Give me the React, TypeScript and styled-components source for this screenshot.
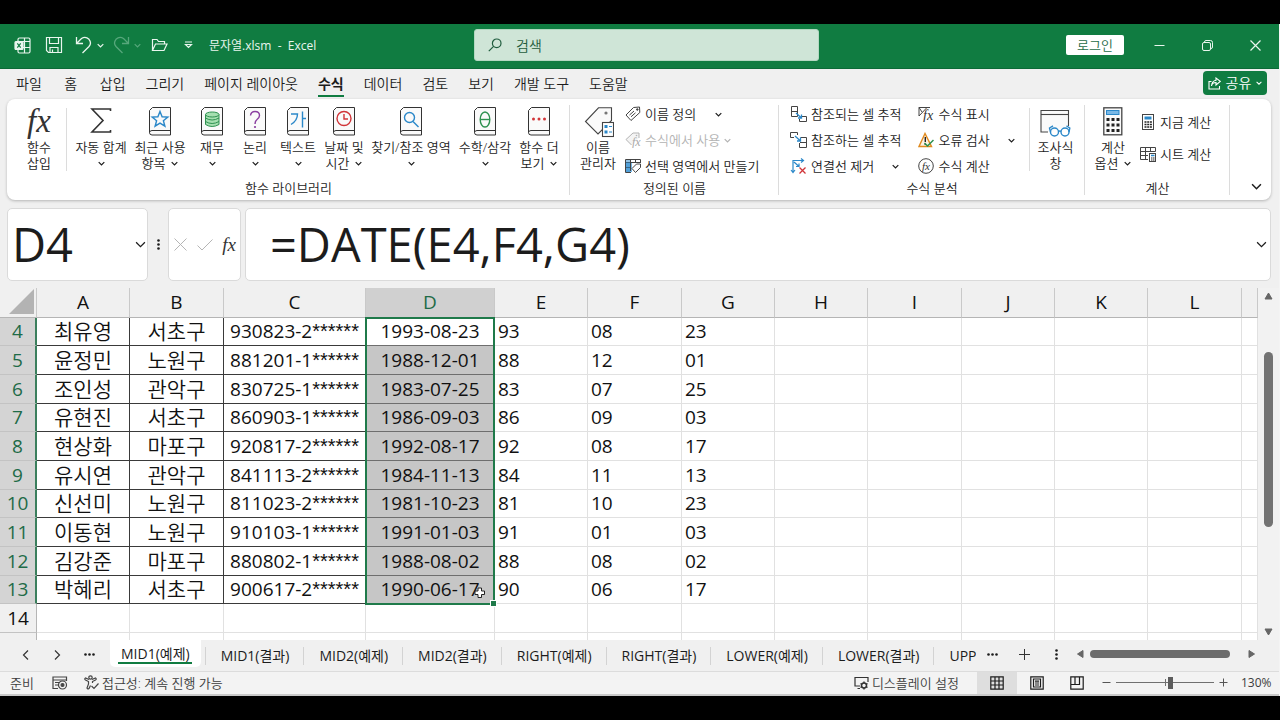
import React from "react";
import styled, { createGlobalStyle, css } from "styled-components";

const GREEN = "#107c41";
const DARK_GREEN = "#1e6b47";
const BLUE = "#2b88c9";
const INK = "#1c1c1c";
const CHROME = "#f0f0f0";

const GlobalStyle = createGlobalStyle`
  * { box-sizing: border-box; }
  body {
    margin: 0;
    background: #000;
    color: ${INK};
    font-family: "Open Sans", "Noto Sans CJK KR", sans-serif;
    font-size: 13px;
    font-weight: 350;
  }
  button, input { font: inherit; color: inherit; }
  button { border: 0; padding: 0; background: none; }
  svg { display: block; flex: none; }
`;

const Screen = styled.div`
  display: flex;
  flex-direction: column;
  height: 100vh;
  padding: 24px 0;
  overflow: hidden;
`;

const Window = styled.div`
  flex: 1;
  min-height: 0;
  display: flex;
  flex-direction: column;
  background: ${CHROME};
  border-right: 1px solid #f4f4f4;
`;

/* Title bar */

const TitleBar = styled.header`
  display: flex;
  align-items: center;
  height: 45px;
  flex: none;
  padding-bottom: 2px;
  background: ${GREEN};
  color: #e9f6ee;
  border-bottom: 1px solid #0c6a37;
`;

const QuickAccess = styled.div`
  flex: 0 0 474px;
  display: flex;
  align-items: center;
  padding-left: 14px;
`;

const QuickButton = styled.button<{ $w: number; $dim?: boolean }>`
  width: ${(p) => p.$w}px;
  height: 24px;
  display: flex;
  align-items: center;
  justify-content: center;
  color: ${(p) => (p.$dim ? "#56a77b" : "#e9f6ee")};
`;

const FileName = styled.span`
  margin-left: 8px;
  font-size: 12px;
  font-weight: 400;
  white-space: pre;
`;

const SearchBox = styled.label`
  flex: 0 1 345px;
  height: 32px;
  display: flex;
  align-items: center;
  gap: 14px;
  padding-left: 13px;
  background: #cfe5d7;
  border: 1px solid #b4d8c2;
  border-radius: 3px;
  color: #1f5c3d;
`;

const SearchInput = styled.input`
  flex: 1;
  min-width: 0;
  border: 0;
  outline: 0;
  padding: 0;
  background: transparent;
  font-size: 14px;
  &::placeholder { color: #1f5c3d; opacity: 1; }
`;

const WindowControls = styled.div`
  flex: 1;
  display: flex;
  align-items: center;
  justify-content: flex-end;
`;

const LoginButton = styled.button`
  width: 58px;
  height: 20px;
  margin-right: 11px;
  border-radius: 2px;
  background: #fff;
  color: ${DARK_GREEN};
  line-height: 20px;
`;

const ControlButton = styled.button`
  width: 48px;
  height: 42px;
  display: flex;
  align-items: center;
  justify-content: center;
`;

/* Ribbon tabs */

const MenuBar = styled.nav`
  display: flex;
  align-items: center;
  height: 30px;
  flex: none;
  padding: 0 12px 0 6px;
`;

const MenuTab = styled.button<{ $active?: boolean }>`
  min-width: 38px;
  padding: 0 10px;
  font-size: 14px;
  line-height: 26px;
  white-space: nowrap;
  ${(p) =>
    p.$active &&
    css`
      font-weight: 700;
      background: linear-gradient(${GREEN}, ${GREEN}) center bottom / 26px 2px no-repeat;
    `}
`;

const ShareButton = styled.button`
  display: flex;
  align-items: center;
  justify-content: center;
  gap: 5px;
  width: 64px;
  height: 24px;
  margin: 0 0 2px auto;
  border-radius: 4px;
  background: ${GREEN};
  color: #fff;
  font-size: 14px;
  line-height: 24px;
`;

/* Ribbon */

const Ribbon = styled.section`
  display: flex;
  flex: none;
  height: 101px;
  margin: 0 8px 0 7px;
  background: #fff;
  border-radius: 8px;
  box-shadow: 0 1px 3px rgba(0, 0, 0, 0.25);
`;

const Group = styled.div<{ $w: number }>`
  flex: 0 0 ${(p) => p.$w}px;
  display: flex;
  flex-direction: column;
  padding-top: 2px;
  background: linear-gradient(#dcdcdc, #dcdcdc) right center / 1px 90px no-repeat;
`;

const GroupBody = styled.div<{ $left: number }>`
  display: flex;
  height: 78px;
  padding-left: ${(p) => p.$left}px;
`;

const GroupTitle = styled.div`
  line-height: 18px;
  text-align: center;
`;

const Tools = styled.div`
  display: flex;
  gap: 1px;
`;

const Divider = styled.div`
  width: 1px;
  height: 63px;
  margin: 7px 5px 0;
  background: #dcdcdc;
`;

const BigButton = styled.button<{ $w: number }>`
  width: ${(p) => p.$w}px;
  display: flex;
  flex-direction: column;
  align-items: center;
  padding-top: 6px;
  line-height: 16px;
  white-space: nowrap;
`;

const BigIcon = styled.span`
  height: 32px;
  display: flex;
  align-items: flex-start;
`;

const LabelLine = styled.span`
  display: flex;
  align-items: center;
  gap: 6px;
  height: 16px;
`;

const Rows = styled.div<{ $left?: number; $top?: number }>`
  display: flex;
  flex-direction: column;
  margin-left: ${(p) => p.$left ?? 0}px;
  padding-top: ${(p) => p.$top ?? 0}px;
`;

const SmallButton = styled.button<{ $h?: number; $w?: number; $disabled?: boolean }>`
  display: flex;
  align-items: center;
  gap: 4px;
  height: ${(p) => p.$h ?? 26}px;
  width: ${(p) => (p.$w ? `${p.$w}px` : "auto")};
  line-height: 20px;
  white-space: nowrap;
  color: ${(p) => (p.$disabled ? "#b3b3b3" : INK)};
`;

const PushRight = styled.span`
  margin-left: auto;
`;

const CollapseButton = styled.button`
  align-self: flex-end;
  margin: 0 8px 4px auto;
  width: 14px;
  height: 20px;
  display: flex;
  align-items: center;
  justify-content: center;
`;

/* Formula bar */

const FormulaBar = styled.div`
  display: flex;
  flex: none;
  height: 73px;
  margin: 8px 8px 7px 7px;
`;

const Panel = styled.div`
  display: flex;
  align-items: center;
  min-width: 0;
  background: #fff;
  border: 1px solid #dadada;
  border-radius: 5px;
`;

const NamePanel = styled(Panel)`
  flex: 0 0 141px;
  padding: 0 1px 0 4px;
`;

const FunctionPanel = styled(Panel)`
  flex: 0 0 73px;
  justify-content: space-between;
  padding: 0 4px 0 5px;
  margin-right: 4px;
`;

const FormulaPanel = styled(Panel)`
  flex: 1;
  padding: 0 3px 0 24px;
`;

const CellInput = styled.input`
  flex: 1;
  width: 0;
  min-width: 0;
  height: 68px;
  padding: 0 0 2px;
  border: 0;
  outline: 0;
  background: transparent;
  font-size: 47px;
  font-weight: 400;
`;

const Grip = styled.span`
  flex: 0 0 20px;
  display: flex;
  align-items: center;
  justify-content: center;
`;

const FxText = styled.span<{ $size: number }>`
  font-family: "Liberation Serif", serif;
  font-style: italic;
  font-size: ${(p) => p.$size}px;
  line-height: 28px;
  color: #333;
`;

/* Sheet */

const SheetArea = styled.main`
  flex: 1;
  min-height: 0;
  display: flex;
  overflow: hidden;
`;

const GridView = styled.div`
  flex: 1;
  min-width: 0;
  overflow: hidden;
  background: #fff;
`;

const Grid = styled.table`
  width: 100%;
  table-layout: fixed;
  border-collapse: separate;
  border-spacing: 0;
  font-size: 19px;
  color: #111;
`;

const HeadRow = styled.tr`
  height: 30px;
`;

const ColumnHead = styled.th<{ $selected?: boolean; $corner?: boolean }>`
  padding: 0 0 2px;
  font-weight: 400;
  line-height: 26px;
  background: ${(p) => (p.$selected ? "#d0d0d0" : CHROME)};
  color: ${(p) => (p.$selected ? DARK_GREEN : "#111")};
  border-right: 1px solid #c9c9c9;
  border-bottom: 1px solid ${(p) => (p.$selected ? GREEN : "#b5b5b5")};
`;

const CornerMark = styled.span`
  display: block;
  width: 25px;
  height: 25px;
  margin: 0 2px 0 auto;
  background: #b3b3b3;
  clip-path: polygon(100% 0, 100% 100%, 0 100%);
`;

const Row = styled.tr`
  height: 29px;
  &:nth-child(3n + 1) { height: 28px; }
`;

const RowHead = styled.th<{ $selected?: boolean }>`
  padding: 0 0 1px;
  font-weight: 400;
  line-height: 24px;
  background: ${(p) => (p.$selected ? "#d4d4d4" : CHROME)};
  color: ${(p) => (p.$selected ? DARK_GREEN : "#111")};
  border-right: ${(p) => (p.$selected ? "2px solid #3b7f5d" : "1px solid #b5b5b5")};
  border-bottom: 1px solid #c3c3c3;
`;

type CellKind = "plain" | "boxed" | "picked" | "active";

const Cell = styled.td<{ $kind: CellKind; $korean?: boolean }>`
  position: relative;
  height: inherit;
  padding: 0 0 1px ${(p) => (p.$kind === "plain" ? 3 : 0)}px;
  line-height: 24px;
  white-space: nowrap;
  font-size: ${(p) => (p.$korean ? 21 : 19)}px;
  font-weight: ${(p) => (p.$korean ? 350 : 400)};
  text-align: ${(p) => (p.$kind === "plain" ? "left" : "center")};
  border-right: 1px solid ${(p) => (p.$kind === "plain" ? "#e1e1e1" : "#3a3a3a")};
  border-bottom: 1px solid
    ${(p) => (p.$kind === "plain" ? "#e1e1e1" : p.$kind === "boxed" ? "#3a3a3a" : "#6e6e6e")};
  background: ${(p) => (p.$kind === "picked" ? "#c6c6c6" : "#fff")};
`;

const Mask = styled.span`
  font-family: "Liberation Sans", sans-serif;
  font-size: 20px;
  line-height: 20px;
`;

const Selection = styled.span`
  position: absolute;
  z-index: 1;
  top: -1px;
  left: -1px;
  right: -1px;
  height: 288px;
  border: 2px solid #1f7a4a;
  pointer-events: none;
  &::after {
    content: "";
    position: absolute;
    right: -3px;
    bottom: -3px;
    width: 5px;
    height: 5px;
    background: #1f7a4a;
    outline: 1px solid #fff;
  }
`;

const Pointer = styled.span`
  position: absolute;
  z-index: 2;
  right: 8px;
  bottom: 4px;
`;

const VerticalScroll = styled.div`
  flex: 0 0 21px;
  display: flex;
  flex-direction: column;
  align-items: center;
  padding: 4px 0;
  background: #f2f2f2;
`;

const VerticalTrack = styled.div`
  flex: 1;
  padding-top: 52px;
`;

const VerticalThumb = styled.div`
  width: 9px;
  height: 175px;
  border-radius: 5px;
  background: #737373;
`;

/* Sheet tabs */

const SheetBar = styled.div`
  display: flex;
  flex: none;
  height: 32px;
  background: ${CHROME};
  border-bottom: 1px solid #dcdcdc;
`;

const SheetNav = styled.div`
  flex: 0 0 110px;
  display: flex;
  align-items: center;
  padding: 0 0 2px 9px;
`;

const NavButton = styled.button`
  width: 32px;
  height: 28px;
  display: flex;
  align-items: center;
  justify-content: center;
`;

const TabList = styled.div`
  flex: 1;
  min-width: 0;
  display: flex;
  align-items: flex-start;
  overflow: hidden;
`;

const SheetTab = styled.button<{ $active?: boolean }>`
  flex: none;
  height: 32px;
  padding: 0 14px 0 16px;
  font-size: 14px;
  font-weight: 400;
  line-height: 30px;
  background: linear-gradient(#d3d3d3, #d3d3d3) left center / 1px 18px no-repeat;
  ${(p) =>
    p.$active &&
    css`
      height: 27px;
      margin-right: 4px;
      padding: 0 11px;
      line-height: 24px;
      background: linear-gradient(${GREEN}, ${GREEN}) center 22px / 74px 2px no-repeat, #fff;
      border-radius: 0 0 5px 5px;
    `}
`;

const SheetTools = styled.div`
  flex: 0 0 95px;
  display: flex;
  align-items: center;
  padding-bottom: 2px;
`;

const HorizontalScroll = styled.div`
  flex: 0 0 207px;
  display: flex;
  align-items: center;
  gap: 5px;
  padding: 0 23px 4px 4px;
`;

const HorizontalTrack = styled.div`
  flex: 1;
`;

const HorizontalThumb = styled.div`
  width: 140px;
  height: 8px;
  border-radius: 4px;
  background: #6c6c6c;
`;

/* Status bar */

const StatusBar = styled.footer`
  display: flex;
  align-items: center;
  flex: none;
  height: 25px;
  margin-top: -1px;
  padding: 0 0 1px 10px;
  background: #f3f3f3;
  border-top: 1px solid #dcdcdc;
  border-bottom: 2px solid #c9c9c9;
  font-size: 13px;
  line-height: 20px;
  color: #3c3c3c;
  white-space: nowrap;
`;

const StatusItem = styled.button<{ $left?: number }>`
  display: flex;
  align-items: center;
  gap: 3px;
  margin-left: ${(p) => p.$left ?? 0}px;
`;

const ViewButtons = styled.div`
  display: flex;
  margin-left: 18px;
`;

const ViewButton = styled.button<{ $on?: boolean }>`
  width: 40px;
  height: 22px;
  display: flex;
  align-items: center;
  justify-content: center;
  color: ${INK};
  background: ${(p) => (p.$on ? "#dedede" : "transparent")};
`;

const ZoomButton = styled.button`
  width: 19px;
  height: 20px;
  display: flex;
  align-items: center;
  justify-content: center;
`;

const ZoomSlider = styled.input`
  appearance: none;
  width: 98px;
  height: 12px;
  margin: 0;
  background: linear-gradient(#707070, #707070) center / 100% 1px no-repeat,
    linear-gradient(#707070, #707070) center / 1px 7px no-repeat;
  &::-webkit-slider-thumb {
    appearance: none;
    width: 5px;
    height: 12px;
    background: #5c5c5c;
  }
`;

const ZoomValue = styled.span`
  width: 46px;
  padding-left: 8px;
  font-size: 12px;
  font-weight: 400;
`;

/* Icons */

const Chevron = ({ w = 7, s = 1.4 }: { w?: number; s?: number }) => (
  <svg width={w} height={w} viewBox="0 0 8 8" fill="none" stroke="currentColor" strokeWidth={s}>
    <path d="M.8 2.4L4 5.6L7.2 2.4" />
  </svg>
);

const Triangle = ({ d }: { d: string }) => (
  <svg width="9" height="8" viewBox="0 0 9 8" fill="#666">
    <path d={d} stroke="#666" strokeLinejoin="round" />
  </svg>
);

const Book = ({ children }: { children: React.ReactNode }) => (
  <svg width="22" height="29" viewBox="0 0 22 29" fill="none">
    <path
      d="M3.5 .5H21.5V28H3A2.5 2.5 0 0 1 .5 25.500V3.500L3.500 .5Z"
      fill="#fafafa"
      stroke="#333"
    />
    <path d="M.5 25.500A2.500 2.300 0 0 1 3 23.500H21.500" stroke="#333" />
    {children}
  </svg>
);

const SmallIcon = ({ children, w = 16 }: { children: React.ReactNode; w?: number }) => (
  <svg width={w} height="16" viewBox={`0 0 ${w} 16`} fill="none" stroke="#444">
    {children}
  </svg>
);

const IconFx = ({ x, y, size, color = "#333" }: { x: number; y: number; size: number; color?: string }) => (
  <text
    x={x}
    y={y}
    fontSize={size}
    fill={color}
    stroke="none"
    fontFamily="Liberation Serif, serif"
    fontStyle="italic"
  >
    fx
  </text>
);

const ExcelIcon = () => (
  <svg width="17" height="17" viewBox="0 0 17 17" fill="none" stroke="currentColor" strokeWidth="1.2">
    <path d="M4 4V2.500Q4 1 5.500 1H14.500Q16 1 16 2.500V14.500Q16 16 14.500 16H5.500Q4 16 4 14.500V13M10.500 1V16M4 4.500H16M9 10.500H16" />
    <rect x="1" y="4.500" width="8" height="8" rx="1" fill="#e9f6ee" />
    <path d="M3.300 6.300L6.700 10.700M6.700 6.300L3.300 10.700" stroke={GREEN} />
  </svg>
);

const SaveIcon = () => (
  <svg width="18" height="18" viewBox="0 0 18 18" fill="none" stroke="currentColor" strokeWidth="1.200">
    <path d="M1.500 1.500H16.500V16.500H3.500L1.500 14.500ZM4.500 1.500V7.500H13.500V1.500M5 16.500V11.500H13V16.500M7.500 16.500V13.500" />
  </svg>
);

const UndoIcon = ({ flip }: { flip?: boolean }) => (
  <svg width="17" height="18" viewBox="0 0 17 18" fill="none" stroke="currentColor" strokeWidth="1.300">
    <g transform={flip ? "matrix(-1 0 0 1 17 0)" : undefined}>
      <path d="M1.500 1V7.500H8M1.500 7.500L6.500 2.500Q10.500 0 14 3.300Q17 7 14 10.500L7.500 17" />
    </g>
  </svg>
);

const FolderIcon = () => (
  <svg width="17" height="14" viewBox="0 0 17 14" fill="none" stroke="currentColor" strokeWidth="1.200">
    <path d="M1.500 12.500V1.500H6L7.500 3.500H13.500V6M1.500 12.500L4.500 6H16L13 12.500Z" />
  </svg>
);

const MoreCommandsIcon = () => (
  <svg width="9" height="8" viewBox="0 0 9 8" fill="none" stroke="currentColor" strokeWidth="1.200">
    <path d="M1 1H8M1.500 3.500L4.500 6.500L7.500 3.500Z" />
  </svg>
);

const SearchIcon = () => (
  <svg width="14" height="14" viewBox="0 0 14 14" fill="none" stroke="currentColor" strokeWidth="1.200">
    <circle cx="8.700" cy="5.300" r="4.300" />
    <path d="M5.600 8.400L.8 13.200" />
  </svg>
);

const SigmaIcon = () => (
  <svg width="22" height="27" viewBox="0 0 22 27" fill="none" stroke="#333" strokeWidth="1.600">
    <path d="M20.500 4V2H2L13 13.500L2 25H20.500V23" />
  </svg>
);

const NameManagerIcon = () => (
  <svg width="31" height="31" viewBox="0 0 31 31" fill="none" stroke="#444" strokeWidth="1.100">
    <path d="M15.500 .8H28.500V13.500L15 27L2.500 14.500Z" fill="#fafafa" />
    <circle cx="23" cy="6" r="1.600" fill="#777" stroke="none" />
    <rect x="19.500" y="15.500" width="11" height="14" fill="#fff" />
    <path d="M21.500 19.500H24.500M21.500 25H24.500" stroke={BLUE} strokeWidth="3" />
    <path d="M26 19.500H29M26 25H29" stroke={BLUE} />
  </svg>
);

const TagIcon = () => (
  <SmallIcon>
    <path d="M8.500 1.500L14.500 1L14.800 6.500L6 14.500L1 9Z" />
    <path d="M4.500 9L9 5M6 10.800L10.500 6.800" />
    <circle cx="12.300" cy="3.500" r=".8" fill="#444" />
  </SmallIcon>
);

const TagFxIcon = () => (
  <SmallIcon>
    <path d="M6.500 13L1 7.500L8 1H14V6" stroke="#b3b3b3" fill="#f4f4f4" />
    <circle cx="11.500" cy="3.500" r=".8" fill="#b3b3b3" stroke="none" />
    <IconFx x={7} y={14} size={12} color="#a8a8a8" />
  </SmallIcon>
);

const SelectionNameIcon = () => (
  <SmallIcon>
    <path d="M1 4.500H7V14H1Z" fill="#79b8e6" stroke="none" />
    <path d="M.5 1.500H15.500V5M.5 1.500V14.500H6M.5 4.500H15M.5 9.500H6M5.500 1.500V13M10.500 1.500V5" />
    <path d="M1 2H5V14H1Z" fill={BLUE} fillOpacity=".5" stroke="none" />
    <path d="M7 10.500L11.500 6H15.500V9.500L10.500 14.500Z" fill="#fff" />
  </SmallIcon>
);

const PrecedentsIcon = () => (
  <SmallIcon w={17}>
    <path d="M1.500 .5H7.500V10.500H1.500ZM1.500 5.500H7.500M12 10.500H16.500V15.500H9.500V13" />
    <path d="M6 7L11.500 12M11.500 8.500V12H8" stroke={BLUE} strokeWidth="1.300" />
  </SmallIcon>
);

const DependentsIcon = () => (
  <SmallIcon w={17}>
    <path d="M4 5.500H.5V.5H7.500V3M10.500 5.500H16.500V15.500H9.500V11M10 10.500H16.500" />
    <path d="M5 4L10.500 9M10.500 5.500V9H7" stroke={BLUE} strokeWidth="1.300" />
  </SmallIcon>
);

const RemoveArrowsIcon = () => (
  <SmallIcon w={17}>
    <path d="M3 14.500V2.500H13M11 .5L13.500 2.500L11 4.500M1 12L3 14.500L5 12M4 4L9 8.500M9 5.500V8.500H6" stroke={BLUE} strokeWidth="1.200" />
    <path d="M9.500 9.500L15.500 15.500M15.500 9.500L9.500 15.500" stroke="#d13438" strokeWidth="1.300" />
  </SmallIcon>
);

const ShowFormulasIcon = () => (
  <SmallIcon>
    <path d="M1 10V1.500H12M1 10L8.500 2M1 1.500L4 6" />
    <IconFx x={5} y={14} size={14} />
  </SmallIcon>
);

const ErrorCheckIcon = () => (
  <SmallIcon>
    <path d="M7 1.500L1 14.500H13.500Z" fill="#fdf1e2" stroke="#e08a1e" strokeWidth="1.400" />
    <path d="M7.300 5V10M7.300 11.500V13" stroke="#222" strokeWidth="1.400" />
    <path d="M6.500 11L9.500 14L15.500 8" stroke="#2e9150" strokeWidth="1.500" />
  </SmallIcon>
);

const EvaluateIcon = () => (
  <SmallIcon>
    <circle cx="8" cy="8" r="7.300" />
    <IconFx x={4} y={11.500} size={11} />
  </SmallIcon>
);

const WatchIcon = () => (
  <svg width="31" height="31" viewBox="0 0 31 31" fill="none" stroke="#444" strokeWidth="1.100">
    <path d="M8 25H1V3.500H28.500V19" fill="#fafafa" />
    <path d="M1 7.500H28.500" />
    <g stroke={BLUE} strokeWidth="1.400">
      <circle cx="14.500" cy="25" r="4" />
      <circle cx="25" cy="25" r="4" />
      <path d="M18.500 24.500Q19.800 23.500 21 24.500M10.500 25L9.500 21L13 18.800M29 25L29.800 21L26.500 18.800" />
    </g>
  </svg>
);

const CalculatorIcon = () => (
  <svg width="20" height="29" viewBox="0 0 20 29" fill="none" stroke="#444">
    <rect x=".8" y=".8" width="18" height="27" fill="#fafafa" strokeWidth="1.300" />
    <rect x="3.500" y="3.500" width="12.500" height="4" fill="#79b8e6" stroke={BLUE} />
    <path d="M3.500 12.500H16.500M3.500 18H16.500M3.500 23.500H16.500" stroke="#222" strokeWidth="3" strokeDasharray="3 2" />
  </svg>
);

const CalculateNowIcon = () => (
  <SmallIcon>
    <rect x="2.500" y=".5" width="11" height="15" />
    <path d="M4.500 4H11.500" stroke={BLUE} strokeWidth="3" />
    <path d="M4.500 8H12M4.500 10.500H12M4.500 13H12" stroke="#222" strokeWidth="1.600" strokeDasharray="2 .7" />
  </SmallIcon>
);

const CalculateSheetIcon = () => (
  <SmallIcon>
    <path d="M.5 1.500H15.500V5.500M.5 1.500V13.500H8M.5 5.500H15.500M.5 9.500H8M5.500 1.500V13.500M10.500 1.500V6" />
    <rect x="9.500" y="7.500" width="6" height="8" fill="#fff" />
    <path d="M11 9.500H14.500" stroke={BLUE} strokeWidth="1.500" />
    <path d="M11 12H14.500M11 14H14.500" stroke="#222" strokeDasharray="1.500 .5" />
  </SmallIcon>
);

const ShareIcon = () => (
  <svg width="13" height="13" viewBox="0 0 13 13" fill="none" stroke="currentColor" strokeWidth="1.100">
    <path d="M3.500 4.500H1V12H11.500V9M3.500 9Q4 5.500 8 5.500V8L12.300 4.300L8 1V3.300Q4 4 3.500 9Z" />
  </svg>
);

const Dots = ({ vertical }: { vertical?: boolean }) => (
  <svg width="13" height="13" viewBox="0 0 13 13" fill="currentColor">
    {[2.5, 6.5, 10.5].map((n) => (
      <circle key={n} cx={vertical ? 6.5 : n} cy={vertical ? n : 6.5} r="1.300" />
    ))}
  </svg>
);

const MacroIcon = () => (
  <svg width="16" height="14" viewBox="0 0 16 14" fill="none" stroke="#444" strokeWidth="1.200">
    <path d="M6 12.500H1V1H14.500V5M1 4H14.500M3 6.500H7M3 9H6" />
    <circle cx="10.500" cy="9" r="4" />
    <circle cx="10.500" cy="9" r="1.500" fill="#444" />
  </svg>
);

const AccessibilityIcon = () => (
  <svg width="15" height="15" viewBox="0 0 15 15" fill="none" stroke="#444" strokeWidth="1.200">
    <circle cx="6.500" cy="2.500" r="1.700" />
    <path d="M5 4.500L1.500 3Q0 4 1.500 5L4.500 6.500V9L3 13Q3.500 14.500 5 13.500L6.500 10.500M8 4.500L11.500 3Q13 4 11.500 5L8.500 6.500V8M7.500 11L10 13.500L14.500 8.500" />
  </svg>
);

const DisplayIcon = () => (
  <svg width="15" height="14" viewBox="0 0 15 14" fill="none" stroke="#333" strokeWidth="1.200">
    <path d="M6 10H1V1.500H14V6M3.500 12.500H6" />
    <circle cx="10" cy="9.500" r="2.500" strokeWidth="1.500" />
    <path d="M10 5.500V7M10 12V13.500M6.500 7.500L8 8.500M12 10.500L13.500 11.500M6.500 11.500L8 10.500M12 8.500L13.500 7.500" strokeWidth="1.400" />
  </svg>
);

/* Data */

type Tool = { w: number; icon: React.ReactNode; lines: string[]; menu?: boolean };

const STROKE = { fill: "none", strokeWidth: 1.4 };

const libraryTools: Tool[] = [
  { w: 58, icon: <SigmaIcon />, lines: ["자동 합계"], menu: true },
  {
    w: 58,
    icon: (
      <Book>
        <path d="M11 4.500L13.100 9.800L18.800 10.100L14.400 13.700L15.900 19.200L11 16.100L6.100 19.200L7.600 13.700L3.200 10.100L8.900 9.800Z" stroke={BLUE} {...STROKE} />
      </Book>
    ),
    lines: ["최근 사용", "항목"],
    menu: true,
  },
  {
    w: 44,
    icon: (
      <Book>
        <g stroke="#2e9150" fill="#a5dfb0">
          <path d="M4.500 7.500V17.500Q11 21.500 18 17.500V7.500" />
          <ellipse cx="11.250" cy="7.500" rx="6.750" ry="2.500" />
          <path d="M4.500 11Q11 15 18 11M4.500 14.500Q11 18.500 18 14.500" fill="none" />
        </g>
      </Book>
    ),
    lines: ["재무"],
    menu: true,
  },
  {
    w: 40,
    icon: (
      <Book>
        <path d="M6.500 8.500Q7 4.500 11 4.500Q15.500 4.500 15.500 8.500Q15.500 10.500 13 12.500Q11 14 11 17" stroke="#8a3fa0" {...STROKE} />
        <circle cx="11" cy="20" r="1.100" fill="#8a3fa0" />
      </Book>
    ),
    lines: ["논리"],
    menu: true,
  },
  {
    w: 44,
    icon: (
      <Book>
        <path d="M4 7H10.500Q10.500 13.500 4 17.500M15.500 4.500V20.500M15.500 11.500H19" stroke={BLUE} {...STROKE} />
      </Book>
    ),
    lines: ["텍스트"],
    menu: true,
  },
  {
    w: 46,
    icon: (
      <Book>
        <circle cx="11" cy="11.500" r="7" stroke="#d13438" {...STROKE} />
        <path d="M11 7V12H15" stroke="#d13438" {...STROKE} />
      </Book>
    ),
    lines: ["날짜 및", "시간"],
    menu: true,
  },
  {
    w: 86,
    icon: (
      <Book>
        <circle cx="9.500" cy="10.500" r="5" stroke={BLUE} {...STROKE} />
        <path d="M13 14.500L18.500 20" stroke={BLUE} {...STROKE} />
      </Book>
    ),
    lines: ["찾기/참조 영역"],
    menu: true,
  },
  {
    w: 60,
    icon: (
      <Book>
        <ellipse cx="11" cy="12.500" rx="4.800" ry="7.500" stroke="#2e9150" {...STROKE} />
        <path d="M6.200 12.500H15.800" stroke="#2e9150" {...STROKE} />
      </Book>
    ),
    lines: ["수학/삼각"],
    menu: true,
  },
  {
    w: 46,
    icon: (
      <Book>
        <g fill="#d13438">
          <circle cx="5.500" cy="12" r="1.500" />
          <circle cx="11" cy="12" r="1.500" />
          <circle cx="16.500" cy="12" r="1.500" />
        </g>
      </Book>
    ),
    lines: ["함수 더", "보기"],
    menu: true,
  },
];

const BigTool = ({ w, icon, lines, menu }: Tool) => (
  <BigButton $w={w}>
    <BigIcon>{icon}</BigIcon>
    <LabelLine>{lines[0]}</LabelLine>
    <LabelLine>
      {lines[1]}
      {menu && <Chevron />}
    </LabelLine>
  </BigButton>
);

const menuTabs = ["파일", "홈", "삽입", "그리기", "페이지 레이아웃", "수식", "데이터", "검토", "보기", "개발 도구", "도움말"];

const columns = ["A", "B", "C", "D", "E", "F", "G", "H", "I", "J", "K", "L", ""];
const columnWidths = [93, 94, 142, 129, 93, 94, 93, 93, 94, 93, 93, 94];

const people = [
  ["최유영", "서초구", "930823-2", "1993-08-23", "93", "08", "23"],
  ["윤정민", "노원구", "881201-1", "1988-12-01", "88", "12", "01"],
  ["조인성", "관악구", "830725-1", "1983-07-25", "83", "07", "25"],
  ["유현진", "서초구", "860903-1", "1986-09-03", "86", "09", "03"],
  ["현상화", "마포구", "920817-2", "1992-08-17", "92", "08", "17"],
  ["유시연", "관악구", "841113-2", "1984-11-13", "84", "11", "13"],
  ["신선미", "노원구", "811023-2", "1981-10-23", "81", "10", "23"],
  ["이동현", "노원구", "910103-1", "1991-01-03", "91", "01", "03"],
  ["김강준", "마포구", "880802-1", "1988-08-02", "88", "08", "02"],
  ["박혜리", "서초구", "900617-2", "1990-06-17", "90", "06", "17"],
];

const rows: string[][] = [...people, [], []];

const sheetTabs = [
  "MID1(예제)",
  "MID1(결과)",
  "MID2(예제)",
  "MID2(결과)",
  "RIGHT(예제)",
  "RIGHT(결과)",
  "LOWER(예제)",
  "LOWER(결과)",
  "UPP",
];

const cellKind = (row: number, col: number): CellKind => {
  if (row >= people.length || col > 3) return "plain";
  if (col < 3) return "boxed";
  return row === 0 ? "active" : "picked";
};

export default function App() {
  return (
    <Screen>
      <GlobalStyle />
      <Window>
        <TitleBar>
          <QuickAccess>
            <QuickButton $w={17} aria-label="Excel"><ExcelIcon /></QuickButton>
            <QuickButton $w={46} aria-label="저장"><SaveIcon /></QuickButton>
            <QuickButton $w={13} aria-label="실행 취소"><UndoIcon /></QuickButton>
            <QuickButton $w={20} aria-label="실행 취소 목록"><Chevron /></QuickButton>
            <QuickButton $w={22} $dim aria-label="다시 실행"><UndoIcon flip /></QuickButton>
            <QuickButton $w={11} $dim aria-label="다시 실행 목록"><Chevron /></QuickButton>
            <QuickButton $w={32} aria-label="열기"><FolderIcon /></QuickButton>
            <QuickButton $w={26} aria-label="빠른 실행 도구 모음"><MoreCommandsIcon /></QuickButton>
            <FileName>문자열.xlsm  -  Excel</FileName>
          </QuickAccess>
          <SearchBox>
            <SearchIcon />
            <SearchInput type="text" placeholder="검색" aria-label="검색" />
          </SearchBox>
          <WindowControls>
            <LoginButton>로그인</LoginButton>
            <ControlButton aria-label="최소화">
              <svg width="11" height="11" viewBox="0 0 11 11" stroke="currentColor"><path d="M.5 5.500H10.500" /></svg>
            </ControlButton>
            <ControlButton aria-label="이전 크기로">
              <svg width="11" height="11" viewBox="0 0 11 11" fill="none" stroke="currentColor">
                <rect x=".5" y="2.500" width="8" height="8" rx="1.500" />
                <path d="M2.500 2.500V2Q2.500 .5 4 .5H8.500Q10.500 .5 10.500 2.500V7Q10.500 8.500 9 8.500" />
              </svg>
            </ControlButton>
            <ControlButton aria-label="닫기">
              <svg width="11" height="11" viewBox="0 0 11 11" stroke="currentColor" strokeWidth="1.200"><path d="M.5 .5L10.500 10.500M10.500 .5L.5 10.500" /></svg>
            </ControlButton>
          </WindowControls>
        </TitleBar>

        <MenuBar>
          {menuTabs.map((tab) => (
            <MenuTab key={tab} $active={tab === "수식"}>{tab}</MenuTab>
          ))}
          <ShareButton><ShareIcon />공유<Chevron w={6} /></ShareButton>
        </MenuBar>

        <Ribbon>
          <Group $w={563}>
            <GroupBody $left={10}>
              <BigTool w={44} icon={<FxText $size={33}>fx</FxText>} lines={["함수", "삽입"]} />
              <Divider />
              <Tools>
                {libraryTools.map((tool) => (
                  <BigTool key={tool.lines[0]} {...tool} />
                ))}
              </Tools>
            </GroupBody>
            <GroupTitle>함수 라이브러리</GroupTitle>
          </Group>

          <Group $w={209}>
            <GroupBody $left={6}>
              <BigTool w={44} icon={<NameManagerIcon />} lines={["이름", "관리자"]} />
              <Rows $left={5}>
                <SmallButton $w={97}><TagIcon />이름 정의<PushRight><Chevron /></PushRight></SmallButton>
                <SmallButton $disabled><TagFxIcon />수식에서 사용<Chevron /></SmallButton>
                <SmallButton><SelectionNameIcon />선택 영역에서 만들기</SmallButton>
              </Rows>
            </GroupBody>
            <GroupTitle>정의된 이름</GroupTitle>
          </Group>

          <Group $w={306}>
            <GroupBody $left={11}>
              <Rows>
                <SmallButton><PrecedentsIcon />참조되는 셀 추적</SmallButton>
                <SmallButton><DependentsIcon />참조하는 셀 추적</SmallButton>
                <SmallButton $w={109}><RemoveArrowsIcon />연결선 제거<PushRight><Chevron /></PushRight></SmallButton>
              </Rows>
              <Rows $left={17}>
                <SmallButton><ShowFormulasIcon />수식 표시</SmallButton>
                <SmallButton $w={97}><ErrorCheckIcon />오류 검사<PushRight><Chevron /></PushRight></SmallButton>
                <SmallButton><EvaluateIcon />수식 계산</SmallButton>
              </Rows>
              <Rows $left={9}><Divider /></Rows>
              <BigTool w={40} icon={<WatchIcon />} lines={["조사식", "창"]} />
            </GroupBody>
            <GroupTitle>수식 분석</GroupTitle>
          </Group>

          <Group $w={145}>
            <GroupBody $left={6}>
              <BigTool w={44} icon={<CalculatorIcon />} lines={["계산", "옵션"]} menu />
              <Rows $left={5} $top={5}>
                <SmallButton $h={32}><CalculateNowIcon />지금 계산</SmallButton>
                <SmallButton $h={32}><CalculateSheetIcon />시트 계산</SmallButton>
              </Rows>
            </GroupBody>
            <GroupTitle>계산</GroupTitle>
          </Group>
          <CollapseButton aria-label="리본 메뉴 축소"><Chevron w={11} s={1.1} /></CollapseButton>
        </Ribbon>

        <FormulaBar>
          <NamePanel>
            <CellInput type="text" defaultValue="D4" aria-label="이름 상자" />
            <Chevron w={11} s={0.9} />
          </NamePanel>
          <Grip><Dots vertical /></Grip>
          <FunctionPanel>
            <svg width="13" height="13" viewBox="0 0 13 13" stroke="#b5b5b5"><path d="M.5 .5L12.500 12.500M12.500 .5L.5 12.500" /></svg>
            <svg width="16" height="12" viewBox="0 0 16 12" fill="none" stroke="#b5b5b5"><path d="M.5 6.500L5 11L15.500 .5" /></svg>
            <FxText $size={19}>fx</FxText>
          </FunctionPanel>
          <FormulaPanel>
            <CellInput type="text" defaultValue="=DATE(E4,F4,G4)" aria-label="수식 입력줄" />
            <Chevron w={11} s={0.9} />
          </FormulaPanel>
        </FormulaBar>

        <SheetArea>
          <GridView>
            <Grid>
              <colgroup>
                <col width={37} />
                {columnWidths.map((w, i) => <col key={i} width={w} />)}
                <col />
              </colgroup>
              <thead>
                <HeadRow>
                  <ColumnHead><CornerMark /></ColumnHead>
                  {columns.map((c) => (
                    <ColumnHead key={c} $selected={c === "D"}>{c}</ColumnHead>
                  ))}
                </HeadRow>
              </thead>
              <tbody>
                {rows.map((data, r) => (
                  <Row key={r}>
                    <RowHead $selected={r < people.length}>{r <= people.length && r + 4}</RowHead>
                    {columns.map((c, i) => (
                      <Cell key={c} $kind={cellKind(r, i)} $korean={i < 2}>
                        {data[i]}
                        {c === "C" && data[i] && <Mask>******</Mask>}
                        {r === 0 && c === "D" && <Selection />}
                        {r === people.length - 1 && c === "D" && (
                          <Pointer>
                            <svg width="12" height="12" viewBox="0 0 12 12" fill="#fff" stroke="#222">
                              <path d="M4 1H7.500V4H10.500V7.500H7.500V10.500H4V7.500H1V4H4Z" />
                            </svg>
                          </Pointer>
                        )}
                      </Cell>
                    ))}
                  </Row>
                ))}
              </tbody>
            </Grid>
          </GridView>
          <VerticalScroll>
            <Triangle d="M1 7L4.500 1L8 7Z" />
            <VerticalTrack><VerticalThumb /></VerticalTrack>
            <Triangle d="M1 1L4.500 7L8 1Z" />
          </VerticalScroll>
        </SheetArea>

        <SheetBar>
          <SheetNav>
            <NavButton aria-label="이전 시트">
              <svg width="7" height="10" viewBox="0 0 7 10" fill="none" stroke="#333" strokeWidth="1.200"><path d="M6 .5L1.500 5L6 9.500" /></svg>
            </NavButton>
            <NavButton aria-label="다음 시트">
              <svg width="7" height="10" viewBox="0 0 7 10" fill="none" stroke="#333" strokeWidth="1.200"><path d="M1 .5L5.500 5L1 9.500" /></svg>
            </NavButton>
            <NavButton aria-label="모든 시트"><Dots /></NavButton>
          </SheetNav>
          <TabList>
            {sheetTabs.map((tab, i) => (
              <SheetTab key={tab} $active={i === 0}>{tab}</SheetTab>
            ))}
          </TabList>
          <SheetTools>
            <NavButton aria-label="다른 시트"><Dots /></NavButton>
            <NavButton aria-label="새 시트">
              <svg width="11" height="11" viewBox="0 0 11 11" stroke="#333"><path d="M5.500 0V11M0 5.500H11" /></svg>
            </NavButton>
            <NavButton aria-label="탭 옵션"><Dots vertical /></NavButton>
          </SheetTools>
          <HorizontalScroll>
            <Triangle d="M7 .5L1.500 4L7 7.500Z" />
            <HorizontalTrack><HorizontalThumb /></HorizontalTrack>
            <Triangle d="M2 .5L7.500 4L2 7.500Z" />
          </HorizontalScroll>
        </SheetBar>

        <StatusBar>
          <span>준비</span>
          <StatusItem $left={18} aria-label="매크로 기록"><MacroIcon /></StatusItem>
          <StatusItem $left={16}><AccessibilityIcon />접근성: 계속 진행 가능</StatusItem>
          <PushRight />
          <StatusItem><DisplayIcon />디스플레이 설정</StatusItem>
          <ViewButtons>
            <ViewButton $on aria-label="기본">
              <svg width="14" height="14" viewBox="0 0 14 14" fill="none" stroke="currentColor" strokeWidth="1.200"><path d="M.8 .8H13.200V13.200H.8ZM.8 5H13.200M.8 9H13.200M5 .8V13.200M9 .8V13.200" /></svg>
            </ViewButton>
            <ViewButton aria-label="페이지 레이아웃 보기">
              <svg width="14" height="14" viewBox="0 0 14 14" fill="none" stroke="currentColor" strokeWidth="1.200"><path d="M.8 .8H13.200V13.200H.8ZM3.500 3H10.500V11H3.500ZM5 5.200H9M5 7H9M5 9H9" /></svg>
            </ViewButton>
            <ViewButton aria-label="페이지 나누기 미리 보기">
              <svg width="14" height="14" viewBox="0 0 14 14" fill="none" stroke="currentColor" strokeWidth="1.200"><path d="M.8 .8H13.200V13.200H.8ZM5 .8V8.500M.8 8.500H9.500V.8" /></svg>
            </ViewButton>
          </ViewButtons>
          <ZoomButton aria-label="축소">
            <svg width="9" height="9" viewBox="0 0 9 9" stroke="#555"><path d="M.5 4.500H8.500" /></svg>
          </ZoomButton>
          <ZoomSlider type="range" min={0} max={100} defaultValue={56} aria-label="확대/축소" />
          <ZoomButton aria-label="확대">
            <svg width="9" height="9" viewBox="0 0 9 9" stroke="#555"><path d="M.5 4.500H8.500M4.500 .5V8.500" /></svg>
          </ZoomButton>
          <ZoomValue>130%</ZoomValue>
        </StatusBar>
      </Window>
    </Screen>
  );
}
